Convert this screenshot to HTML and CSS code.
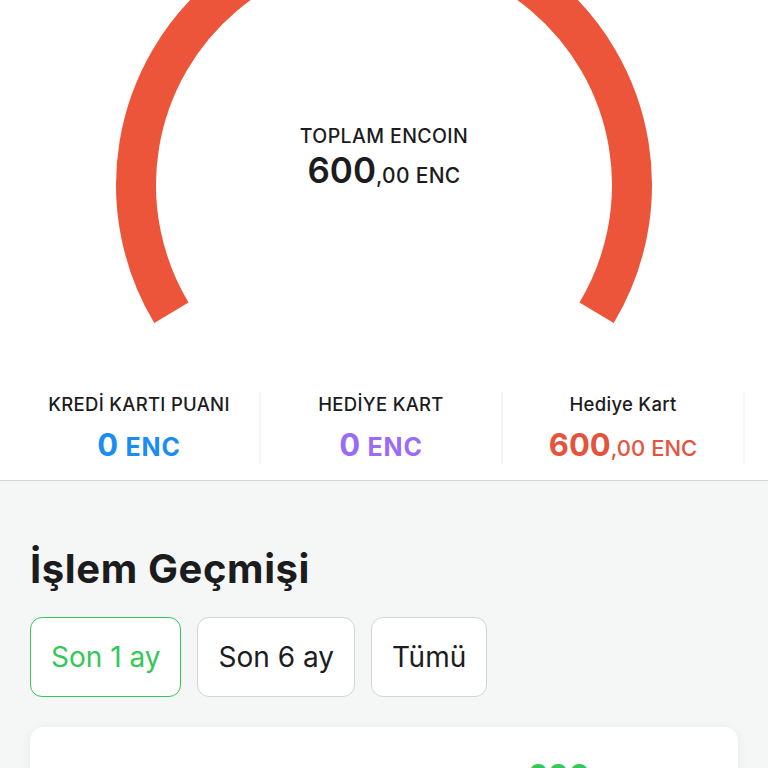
FILE: index.html
```html
<!DOCTYPE html>
<html>
  <head>
    <meta charset="utf-8">
    <title>Encoin</title>
    <link rel="stylesheet" href="styles.css">
  </head>
  <body>
    <section class="top">
      <div class="gauge">
        <svg class="gauge-ring" width="768" height="375" viewBox="0 0 768 375">
          <path d="M171.4 312.7 A248 248 0 1 1 596.6 312.7" fill="none" stroke="#ed553b" stroke-width="40"/>
        </svg>
        <div class="gauge-text">
          <div class="gauge-label">TOPLAM ENCOIN</div>
          <div class="gauge-value"><span class="big">600</span><span class="small">,00 ENC</span></div>
        </div>
      </div>

      <div class="stats">
        <div class="stat">
          <div class="stat-label">KREDİ KARTI PUANI</div>
          <div class="stat-value blue">0 <span class="unit">ENC</span></div>
        </div>
        <div class="stat">
          <div class="stat-label">HEDİYE KART</div>
          <div class="stat-value purple">0 <span class="unit">ENC</span></div>
        </div>
        <div class="stat">
          <div class="stat-label">Hediye Kart</div>
          <div class="stat-value red">600<span class="cents">,00 ENC</span></div>
        </div>
      </div>
    </section>

    <section class="history">
      <h2>İşlem Geçmişi</h2>
      <div class="tabs">
        <button class="tab active">Son 1 ay</button>
        <button class="tab">Son 6 ay</button>
        <button class="tab">Tümü</button>
      </div>

      <div class="card">
        <div class="card-row">
          <div class="stat-value green">600<span class="cents">,00 ENC</span></div>
        </div>
      </div>
    </section>
  </body>
</html>
```

FILE: styles.css
```css
body {
  margin: 0;
  font-family: Inter, "Noto Sans", sans-serif;
  color: #1c1c1e;
  background-color: #f5f6f6;
  overflow: hidden;
}

.top {
  background-color: #fff;
  border-bottom: 1px solid #d6d6d6;
}

.gauge {
  display: grid;
  height: 375px;
}

.gauge-ring,
.gauge-text {
  grid-area: 1 / 1;
}

.gauge-text {
  justify-self: center;
  padding-top: 124px;
  text-align: center;
}

.gauge-label {
  font-size: 19.5px;
  font-weight: 500;
  line-height: 24px;
  letter-spacing: 0.4px;
}

.gauge-value {
  margin-top: 2px;
  line-height: 40px;
  font-weight: 600;
}

.gauge-value .big {
  font-size: 35px;
}

.gauge-value .small {
  font-size: 21px;
  font-weight: 500;
  letter-spacing: 0.3px;
}

.stats {
  display: flex;
  padding: 17px 0 16px 19px;
  overflow: hidden;
}

.stat {
  flex: 0 0 242px;
  box-sizing: border-box;
  border-right: 2px solid #f5f5f5;
  text-align: center;
  padding: 0 0 1px;
}

.stat-label {
  font-size: 18.5px;
  font-weight: 500;
  line-height: 24px;
  letter-spacing: 0.3px;
}

.stat-value {
  margin-top: 14px;
  font-size: 31px;
  font-weight: 700;
  line-height: 30px;
}

.stat-value .unit {
  font-size: 25px;
  letter-spacing: 0.8px;
}

.stat-value .cents {
  font-size: 22px;
  font-weight: 500;
}

.blue {
  color: #1a8cf3;
}

.purple {
  color: #9a6bf6;
}

.red {
  color: #e5533d;
}

.green {
  color: #34c759;
}

.history {
  padding: 65px 30px 0;
}

h2 {
  margin: 0;
  font-size: 40px;
  font-weight: 700;
  line-height: 46px;
  letter-spacing: 0.6px;
  color: #1c1c1e;
}

.tabs {
  display: flex;
  gap: 16px;
  margin-top: 25px;
}

.tab {
  height: 80px;
  padding: 0 20px;
  background-color: #fff;
  border: 1px solid #d4d4d4;
  border-radius: 12px;
  font-family: inherit;
  font-size: 28px;
  color: #1c1c1e;
}

.tab.active {
  border-color: #34c759;
  color: #34c759;
}

.card {
  margin-top: 30px;
  background-color: #fff;
  border-radius: 14px;
  box-shadow: 0 2px 12px rgba(0, 0, 0, 0.06);
  height: 120px;
}

.card-row {
  display: flex;
  justify-content: flex-end;
  padding: 20px 62px 0;
}
```
